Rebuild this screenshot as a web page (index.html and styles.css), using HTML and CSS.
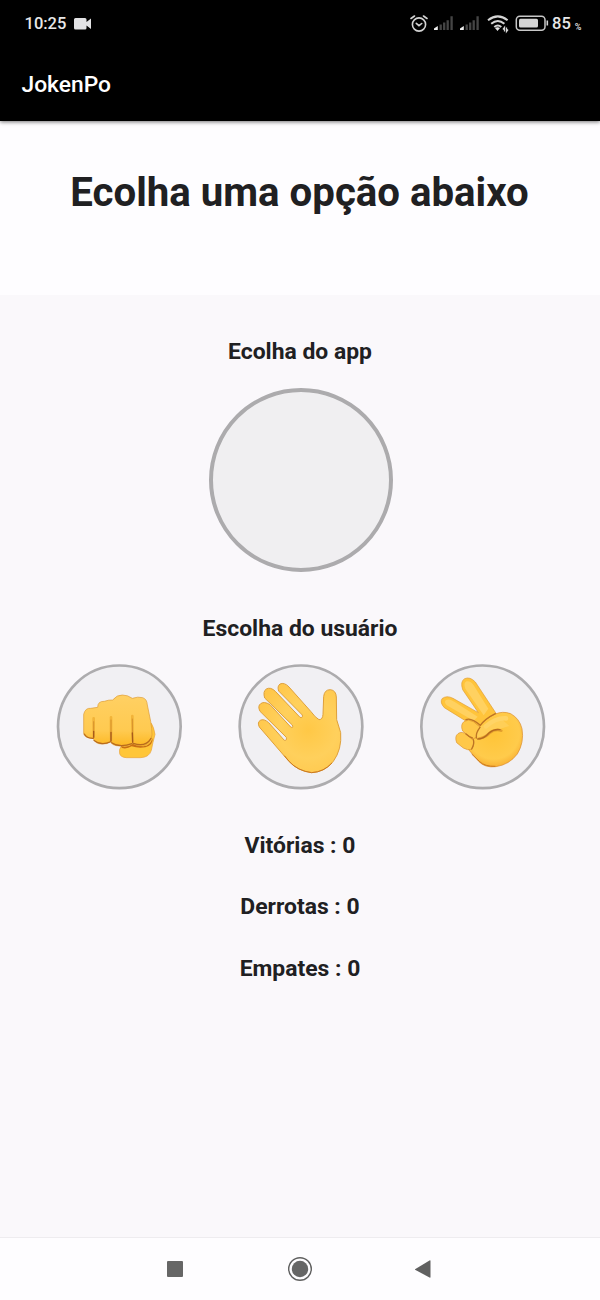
FILE: index.html
```html
<!DOCTYPE html>
<html lang="pt-BR">
<head>
<meta charset="utf-8">
<title>JokenPo</title>
<link rel="stylesheet" href="styles.css">
</head>
<body>
<div class="screen">
  <header class="top">
    <div class="status">
      <span class="clock">10:25</span>
      <svg class="camera" width="18" height="12" viewBox="0 0 18 12"><path d="M1.500 0H11Q12.500 0 12.500 1.500V4L17 0.500V11L12.500 7.500V10Q12.500 11.500 11 11.500H1.500Q0 11.500 0 10V1.500Q0 0 1.500 0Z"/></svg>
      <svg class="indicators" width="142" height="24" viewBox="0 0 142 24">
        <g fill="none" stroke="#d2d2d2" stroke-width="1.600" stroke-linecap="round">
          <circle cx="9" cy="12.500" r="6.600"/>
          <path d="M1 6.500L4.500 4M13.500 4L17 6.500M6.300 11.300L9 13.700L11.700 11.500"/>
        </g>
        <g id="signal">
          <path fill="#ededed" d="M24 18V16.500L27.800 14V18Z"/>
          <path stroke="#454545" stroke-width="2.300" d="M30.700 12.500V18M34.200 10.500V18M37.700 8.300V18M41.600 4.300V18"/>
        </g>
        <use href="#signal" x="26"/>
        <g fill="none" stroke="#d5d5d5" stroke-width="2">
          <path d="M78 8.300Q87.800 0.500 97.600 8.300M81.200 11.800Q87.800 6.200 94.400 11.800M84.300 15Q87.800 12 91.300 15"/>
          <path fill="#e8e8e8" stroke="none" d="M85 16Q87.500 14.500 90 16L87.500 19Z"/>
          <path stroke-width="1.300" d="M94.500 19.500V15.500L93 17.500M96.500 15.500V19.500L98 17.500"/>
        </g>
        <rect x="106.300" y="4.200" width="28.700" height="14" rx="3.500" fill="none" stroke="#c8c8c8" stroke-width="1.500"/>
        <rect x="109" y="6.800" width="19" height="8.800" rx="1.500" fill="#d4d4d4"/>
        <path d="M137.300 8.500V13.500" stroke="#d4d4d4" stroke-width="1.600"/>
      </svg>
      <span class="battery">85</span><span class="percent">%</span>
    </div>
    <div class="title">JokenPo</div>
  </header>
  <section class="banner"><h1>Ecolha uma opção abaixo</h1></section>
  <main class="game">
    <h2 class="label">Ecolha do app</h2>
    <div class="app-choice"></div>
    <h2 class="label user-label">Escolha do usuário</h2>
    <div class="choices">
      <svg class="choice" viewBox="0 0 420 420">
        <defs>
          <linearGradient id="skin" x1="0" y1="0" x2="0" y2="1"><stop offset="0" stop-color="#ffd063"/><stop offset=".7" stop-color="#ffca50"/><stop offset="1" stop-color="#fdb823"/></linearGradient>
          <radialGradient id="palm" gradientUnits="userSpaceOnUse" cx="235" cy="225" r="170"><stop offset="0" stop-color="#ffc846"/><stop offset=".5" stop-color="#ffd05c"/><stop offset="1" stop-color="#ffc648"/></radialGradient>
          <radialGradient id="ball" gradientUnits="userSpaceOnUse" cx="245" cy="235" r="110"><stop offset="0" stop-color="#ffc437"/><stop offset=".7" stop-color="#ffcb4b"/><stop offset="1" stop-color="#f6a72b"/></radialGradient>
        </defs>
        <circle class="ring" cx="208" cy="215.500" r="184"/>
        <path fill="#ffc638" stroke="#e9a13a" stroke-width="2" d="M214 274Q206 282 209 296Q212 307 230 308H272Q298 307 304 286L309 262L315 238Q311 215 304 205L285 255Z"/>
        <path fill="#c96e14" d="M212 273Q230 280 248 267L280 274Q300 273 308 249Q309 272 286 277Q265 281 245 274Q230 283 216 279Z"/>
        <path fill="url(#skin)" stroke="#dd9a35" stroke-width="2" d="M143 157Q143 138 163 139Q177 134 188 135Q201 119 217 120Q233 120 247 130Q264 124 278 128Q291 132 292 150L302 199Q306 221 306 240Q301 270 278 273Q257 274 248 264Q236 274 209 273Q186 272 182 260Q172 268 154 267Q134 266 130 250Q102 250 101 235L101 178Q106 158 122 160Z"/>
        <g fill="none" stroke-linecap="round">
          <path stroke="#f2b439" stroke-width="8" d="M131 190V247M183 187V256M247 183L248 259"/>
          <path stroke="#d18a2a" stroke-width="2.500" d="M131 200V247M183 195V256M247 192L248 259"/>
          <path stroke="#a85a1a" stroke-width="4" d="M131 229V247M183 232V258M247 234L248 262"/>
          <path stroke="#b86b1e" stroke-width="3.500" d="M103 237Q111 251 130 250M132 256Q153 273 182 260M185 263Q207 279 246 266M250 265Q286 278 303 250"/>
        </g>
      </svg>
      <svg class="choice" viewBox="0 0 420 420">
        <circle class="ring" cx="213" cy="215.500" r="184"/>
        <path fill="url(#palm)" stroke="#dfa03a" stroke-width="3" stroke-linejoin="round" d="M267 194Q278 194 279 178L281 125Q283 104 301 104Q318 106 319 126L320 194L332 233Q336 283 310 319Q285 351 245 353Q202 348 175 317L88 216Q81 202 91 196Q101 190 116 203L163 256Q171 258 169 247L90 169Q82 153 92 146Q102 138 120 149L182 216Q191 221 187 210L104 129Q98 109 109 102Q122 95 136 109L210 187Q219 190 217 180L146 108Q141 94 150 87Q163 81 177 96L243 170Q256 188 267 194Z"/>
        <path fill="none" stroke="#cc791e" stroke-width="3" stroke-linecap="round" d="M164 303L178 320Q204 348 245 353Q281 351 305 325"/>
      </svg>
      <svg class="choice" viewBox="0 0 420 420">
        <circle class="ring" cx="212" cy="215.500" r="184"/>
        <path fill="#ffc43b" stroke="#df9c33" stroke-width="2" d="M152 104Q144 79 158 71Q174 64 190 81L254 178L245 199L207 215L160 197L97 158Q83 143 90 131Q104 120 123 130L199 173Z"/>
        <path fill="#ffd160" d="M160 101Q153 84 164 79Q176 77 185 91L229 161L215 181ZM104 151Q94 139 103 135Q111 131 127 140L197 185L185 197Z"/>
        <path fill="url(#ball)" stroke="#d98b2c" stroke-width="2" d="M203 213Q222 189 248 178Q272 167 296 176Q323 191 330 221Q337 262 316 297Q292 329 252 335Q219 339 201 320L168 282Z"/>
        <path fill="#ffc849" stroke="#dc922d" stroke-width="2" d="M152 228Q144 208 157 199Q169 191 184 200L204 216L196 246L180 253ZM134 263Q127 244 138 236Q150 227 165 239L185 255Q187 270 179 283Q167 287 154 279Z"/>
        <path fill="#ffcf57" d="M207 214L195 235Q191 249 205 250Q220 246 231 230Q245 218 265 221L292 213L262 186Z"/>
        <g fill="none" stroke-linecap="round">
          <path stroke="#e4a02e" stroke-width="8" d="M202 251Q222 246 234 233Q250 221 268 227"/>
          <path stroke="#bd7425" stroke-width="4" d="M162 194Q177 187 205 211Q220 191 250 176M204 217Q191 233 193 249M184 254Q188 268 179 282M162 237Q172 246 181 249"/>
          <path stroke="#b56b20" stroke-width="4" d="M197 252Q216 252 231 234Q246 221 264 224"/>
          <path stroke="#ffd466" stroke-width="14" d="M222 214Q251 188 282 190"/>
          <path stroke="#cc7a20" stroke-width="3" d="M180 298L203 320Q219 335 249 334"/>
        </g>
      </svg>
    </div>
    <div class="scores"><p>Vitórias : 0</p><p>Derrotas : 0</p><p>Empates : 0</p></div>
  </main>
  <nav class="navbar">
    <svg width="18" height="18" viewBox="0 0 18 18"><rect x="1" y="1" width="16" height="16" rx="1" fill="#666"/></svg>
    <svg width="26" height="26" viewBox="0 0 26 26"><circle cx="13" cy="13" r="11.300" fill="none" stroke="#606060" stroke-width="1.400"/><circle cx="13" cy="13" r="8.200" fill="#666"/></svg>
    <svg width="18" height="20" viewBox="0 0 18 20"><path fill="#606060" d="M1 10.300L15.500 1.500Q16.500 1 16.500 2V18Q16.500 19 15.500 18.500L1 10.700Z"/></svg>
  </nav>
</div>
</body>
</html>
```
FILE: styles.css
```css
* { box-sizing: border-box; }
body { margin: 0; font-family: Roboto, "Liberation Sans", sans-serif; color: #202022; }
h1, h2, p { margin: 0; }
.screen { width: 600px; height: 1300px; display: flex; flex-direction: column; background: #faf8fb; }
.top { position: relative; z-index: 1; flex: none; height: 121px; background: #000; color: #fff; box-shadow: 0 1px 4px rgba(0, 0, 0, .55); }
.status { display: flex; align-items: center; height: 48px; padding-left: 24.5px; color: #e8e8e8; }
.clock { width: 49.5px; font-size: 16.5px; font-weight: 500; line-height: 24px; }
.camera { fill: #e2e2e4; }
.indicators { margin-left: 318px; flex: none; }
.battery { font-size: 16.5px; font-weight: 500; line-height: 24px; }
.percent { margin: 5px 0 0 4px; font-size: 9px; font-weight: 500; }
.title { padding-left: 21.5px; font-size: 22.8px; font-weight: 500; line-height: 74px; }
.banner { flex: none; height: 174px; background: #fefdff; text-align: center; }
.banner h1 { padding-top: 44px; font-size: 40.2px; font-weight: 700; line-height: 55px; transform: translateX(-0.5px); }
.game { flex: 1; padding-top: 39px; }
.label { font-size: 22.9px; font-weight: 700; line-height: 36px; text-align: center; }
.app-choice { width: 184px; height: 184px; margin: 18px auto 0; transform: translateX(1px); border: 4px solid #acabad; border-radius: 50%; background: #f0eff1; }
.user-label { margin-top: 39px; }
.choices { display: flex; padding-left: 50px; margin-top: 8px; }
.choice { width: 140px; height: 140px; flex: none; }
.choice + .choice { margin-left: 40px; }
.choice + .choice + .choice { margin-left: 42px; }
.ring { fill: #f1f0f3; stroke: #adacae; stroke-width: 8; }
.scores { margin-top: 20px; text-align: center; font-size: 22.9px; font-weight: 700; line-height: 61.4px; }
.navbar { display: flex; flex: none; align-items: center; height: 63px; padding-left: 166px; border-top: 1px solid #eeecef; background: #fefdff; }
.navbar svg + svg { margin-left: 103px; }
.navbar svg + svg + svg { margin-left: 101px; }
```
